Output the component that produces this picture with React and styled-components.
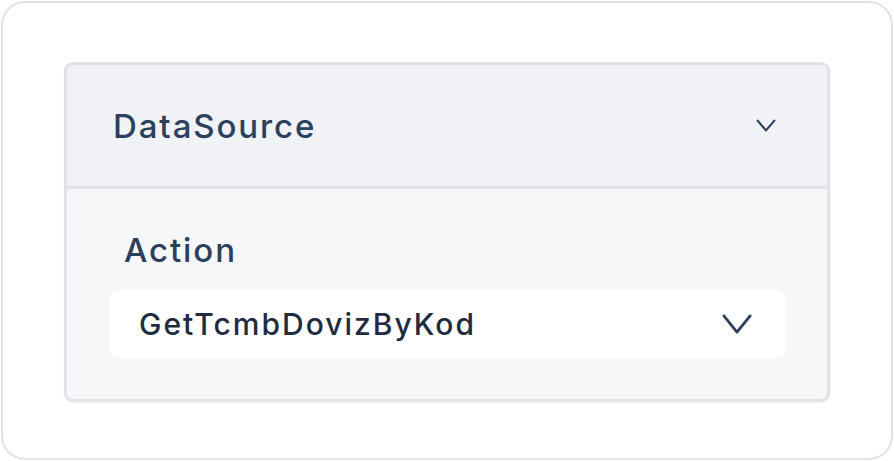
import React from "react";
import styled, { createGlobalStyle } from "styled-components";

const Global = createGlobalStyle`
  html, body { margin: 0; padding: 0; background: #ffffff; }
  body { font-family: Inter, "Noto Sans", sans-serif; }
  * { box-sizing: border-box; }
`;

const Frame = styled.div`
  width: 894px;
  height: 461px;
  padding: 1px;
`;

const Card = styled.div`
  height: 100%;
  border: 2px solid #e1e3e7;
  border-radius: 24px;
  background: #ffffff;
  padding: 59px 61px 0 61px;
`;

const Panel = styled.div`
  width: 766px;
  border: 3px solid #dfe2e7;
  border-radius: 9px;
  overflow: hidden;
  background: #f6f7f9;
  box-shadow: 0 1px 2px rgba(30, 40, 60, 0.08);
`;

const Header = styled.div`
  height: 124px;
  display: flex;
  align-items: center;
  justify-content: space-between;
  padding: 0 51px 0 46px;
  background: #f0f2f5;
  border-bottom: 3px solid #dfe2e7;
`;

const Title = styled.span`
  font-size: 33px;
  font-weight: 500;
  color: #2b405c;
  letter-spacing: 1.9px;
  line-height: 40px;
`;

const Body = styled.div`
  padding: 41px 41px 41px 42px;
  display: flex;
  flex-direction: column;
  gap: 20px;
`;

const Label = styled.div`
  padding-left: 15px;
  font-size: 33px;
  font-weight: 500;
  color: #2b405c;
  letter-spacing: 1.9px;
  line-height: 40px;
`;

const Select = styled.div`
  height: 68px;
  background: #ffffff;
  border-radius: 10px;
  display: flex;
  align-items: center;
  justify-content: space-between;
  padding: 0 34px 0 30px;
`;

const Value = styled.span`
  font-size: 30px;
  font-weight: 500;
  color: #1e2b40;
  letter-spacing: 2px;
  line-height: 36px;
`;

const Chevron = ({ w, h, stroke, color }) => (
  <svg width={w} height={h} viewBox={`0 0 ${w} ${h}`} fill="none">
    <path
      d={`M${stroke / 2 + 0.5} ${stroke / 2 + 0.5} L${w / 2} ${h - stroke / 2 - 0.5} L${w - stroke / 2 - 0.5} ${stroke / 2 + 0.5}`}
      stroke={color}
      strokeWidth={stroke}
      strokeLinecap="round"
      strokeLinejoin="round"
    />
  </svg>
);

export default function App() {
  return (
    <>
      <Global />
      <Frame>
        <Card>
          <Panel>
            <Header>
              <Title>DataSource</Title>
              <Chevron w={20} h={13} stroke={2.2} color="#2b405c" />
            </Header>
            <Body>
              <Label>Action</Label>
              <Select>
                <Value>GetTcmbDovizByKod</Value>
                <Chevron w={30} h={20} stroke={2.8} color="#2b405c" />
              </Select>
            </Body>
          </Panel>
        </Card>
      </Frame>
    </>
  );
}
